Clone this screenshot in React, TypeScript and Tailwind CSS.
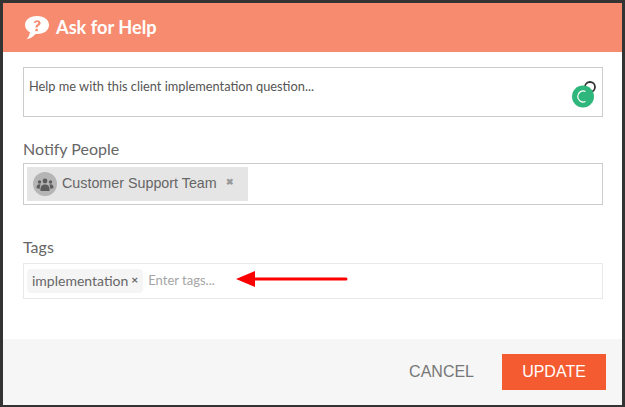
import React from 'react';

const lato = { fontFamily: 'Lato, sans-serif' };

const App: React.FC = () => {
  return (
    <div className="w-[625px] h-[407px] bg-[#333333] pt-[3px] pb-[2px] pl-[3px] pr-[3px] overflow-hidden">
      <div className="w-[619px] h-[402px] bg-white flex flex-col font-['Lato',sans-serif]">
        <div className="h-[49px] shrink-0 bg-[#f78b6f] flex items-center pl-[20px] gap-[5px]">
          <svg width="28" height="26" viewBox="0 0 28 26" className="mt-[1px]">
            <path d="M14 1C6.500 1 2 5 2 10c0 3.200 2 5.800 5 7.300-.3 2.500-1.500 5-3.500 7 3.500-.5 7-2.700 9-5.300h1.500C21.500 19 26 15 26 10S21.500 1 14 1z" fill="#fff" />
            <path d="M10.800 7.800c.4-1.600 1.700-2.500 3.400-2.500 2 0 3.400 1.100 3.400 2.800 0 1.400-.9 2-1.800 2.700-.7.500-1.100.9-1.100 1.800h-2.200c0-1.600.6-2.400 1.600-3.100.8-.6 1.200-.9 1.200-1.500 0-.7-.5-1.100-1.200-1.100-.8 0-1.300.4-1.500 1.200z" fill="#f78b6f" />
            <rect x="12.400" y="13.800" width="2.400" height="2.400" fill="#f78b6f" />
          </svg>
          <span className="text-[18.200px] font-bold text-white leading-none">Ask for Help</span>
        </div>

        <div className="flex-1 pl-[20px] pr-[19px] pt-[15px]">
          <div className="relative h-[50px] border border-[#cccccc] pl-[5px] pt-[10px] text-[12.800px] leading-[16px] text-[#555555]">
            Help me with this client implementation question...
            <svg width="28" height="30" viewBox="0 0 28 30" className="absolute right-[4px] top-[12px]">
              <circle cx="20" cy="7" r="5" fill="none" stroke="#333" strokeWidth="1.800" />
              <circle cx="13" cy="16.500" r="11" fill="#2fb67c" />
              <path d="M15.500 11.500a5.500 5.500 0 1 0 0 10" fill="none" stroke="#fff" strokeWidth="1.200" />
            </svg>
          </div>

          <div className="mt-[22px] text-[16px] leading-[20px] text-[#666666]">Notify People</div>
          <div className="mt-[4px] h-[42px] border border-[#cccccc] p-[3px]">
            <div className="w-[221px] h-[34px] bg-[#e5e5e5] flex items-center pl-[6px] font-['Liberation_Sans',sans-serif] text-[14.300px] text-[#666666]">
              <svg width="24" height="24" viewBox="0 0 24 24" className="shrink-0">
                <circle cx="12" cy="12" r="12" fill="#b5b5b5" />
                <circle cx="12" cy="9" r="2.400" fill="#5c5c5c" />
                <circle cx="6.500" cy="10" r="1.700" fill="#5c5c5c" />
                <circle cx="17.500" cy="10" r="1.700" fill="#5c5c5c" />
                <path d="M7.500 19c-.5-4 1-6.500 4.500-6.500s5 2.500 4.500 6.500z" fill="#5c5c5c" />
                <path d="M3.500 16c0-2.500 1-3.800 3-3.800l1 .3-1 4.500zM20.500 16c0-2.500-1-3.800-3-3.800l-1 .3 1 4.500z" fill="#5c5c5c" />
              </svg>
              <span className="ml-[5px]">Customer Support Team</span>
              <span className="ml-[9px] mb-[3px] text-[9px] font-bold leading-none text-[#999999]">✖</span>
            </div>
          </div>

          <div className="mt-[32px] text-[16px] leading-[20px] text-[#666666]" style={lato}>Tags</div>
          <div className="relative mt-[6px] h-[36px] border border-[#e8e8e8] flex items-center pl-[3px] text-[14px]">
            <div className="h-[24px] rounded-[4px] bg-[#f5f5f5] flex items-center pl-[5px] pr-[5px] pb-[2px] text-[#666666]">
              implementation
              <span className="ml-[3px] text-[12px] font-bold">×</span>
            </div>
            <span className="ml-[5px] text-[#a5a5a5] text-[13px]">Enter tags...</span>
            <svg width="112" height="16" viewBox="0 0 112 16" className="absolute left-[212px] top-[7px]">
              <path d="M18 8H110" stroke="#fc0000" strokeWidth="3" strokeLinecap="round" />
              <path d="M0 8L19 0V16z" fill="#fc0000" />
            </svg>
          </div>
        </div>

        <div className="h-[66px] shrink-0 bg-[#f6f6f6] flex items-center justify-end pr-[16px] font-['Liberation_Sans',sans-serif] text-[16px]">
          <span className="text-[#777777] mr-[28px]">CANCEL</span>
          <div className="w-[104px] h-[36px] bg-[#f45b30] text-white flex items-center justify-center">UPDATE</div>
        </div>
      </div>
    </div>
  );
};

export default App;
